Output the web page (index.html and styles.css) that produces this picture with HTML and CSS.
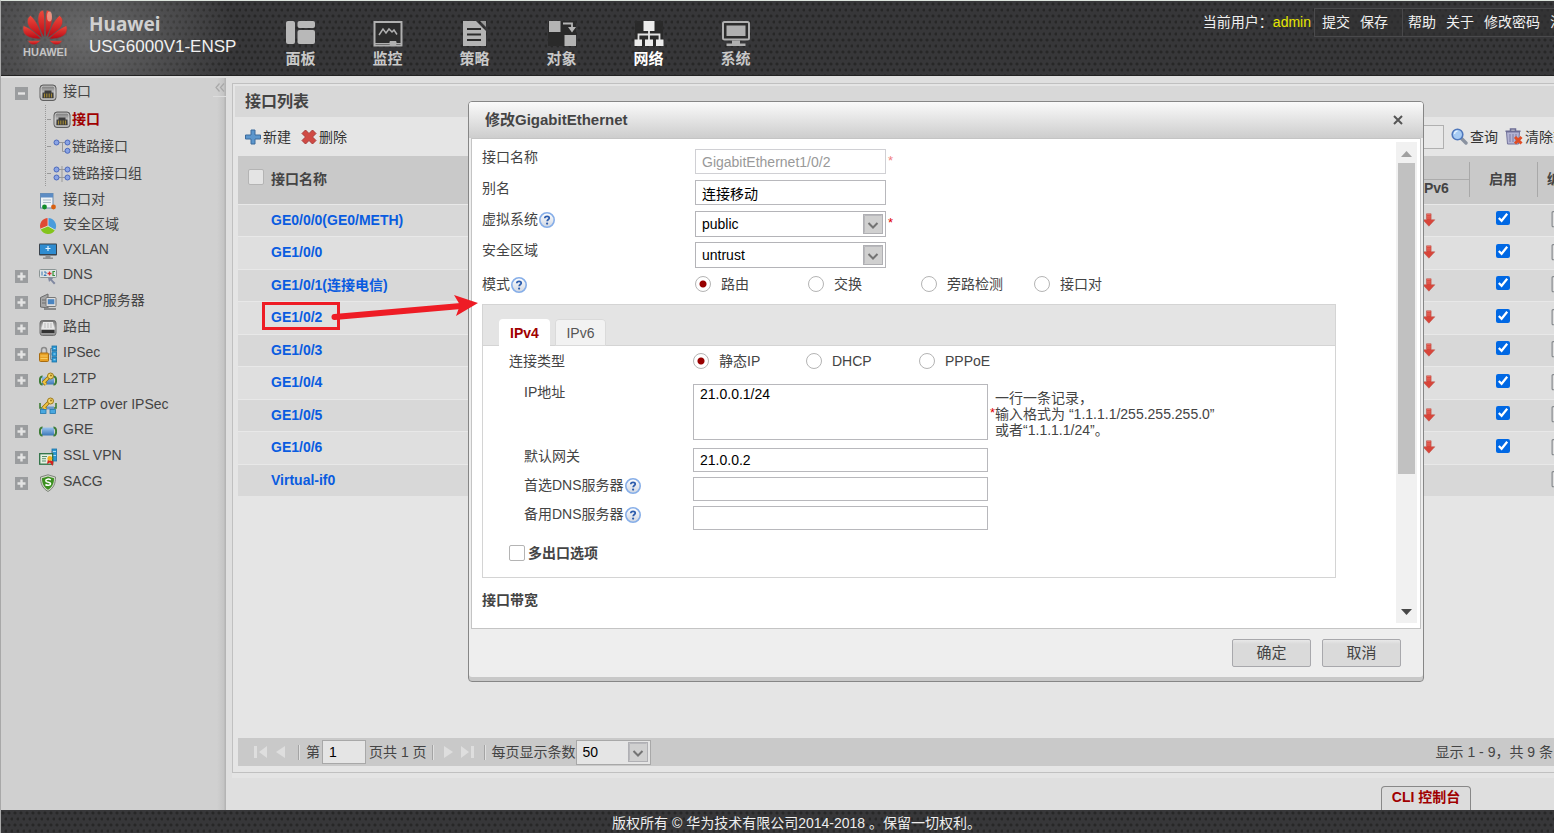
FILE: index.html
```html
<!DOCTYPE html>
<html lang="zh-CN">
<head>
<meta charset="utf-8">
<title>Huawei USG6000V1-ENSP</title>
<link rel="stylesheet" href="styles.css">
</head>
<body>
<svg class="defs" aria-hidden="true">
  <defs>
    <linearGradient id="g-petal" x1="0" y1="0" x2="0" y2="1"><stop offset="0" stop-color="#ee4a3c"/><stop offset="1" stop-color="#b80714"/></linearGradient>
    <linearGradient id="g-metal" x1="0" y1="0" x2="0" y2="1"><stop offset="0" stop-color="#6e6e6e"/><stop offset=".5" stop-color="#c4c4c4"/><stop offset="1" stop-color="#8a8a8a"/></linearGradient>
    <linearGradient id="g-blue" x1="0" y1="0" x2="0" y2="1"><stop offset="0" stop-color="#9cc4ee"/><stop offset="1" stop-color="#3c78b8"/></linearGradient>
    <linearGradient id="g-help" x1="0" y1="0" x2="0" y2="1"><stop offset="0" stop-color="#ffffff"/><stop offset="1" stop-color="#cfd6e2"/></linearGradient>
  </defs>
  <symbol id="i-minus" viewBox="0 0 13 13"><rect width="13" height="13" fill="#9b9d9f"/><path d="M3 6.500h7" stroke="#e4e4e4" stroke-width="2.400"/></symbol>
  <symbol id="i-plus" viewBox="0 0 13 13"><rect width="13" height="13" fill="#9b9d9f"/><path d="M2.500 6.500h8M6.500 2.500v8" stroke="#e4e4e4" stroke-width="2.400"/></symbol>
  <symbol id="i-port" viewBox="0 0 18 18"><rect x="1" y="1" width="16" height="15.500" rx="3" fill="url(#g-metal)" stroke="#606060"/><rect x="2.200" y="2.200" width="13.600" height="13" rx="2" fill="none" stroke="#d4d4d4" stroke-width=".8"/><path d="M3.500 14V8.500h2V6.500h7v2h2V14z" fill="#3c3c3c"/><path d="M5.500 9.500v4M7.800 9.500v4M10.200 9.500v4M12.500 9.500v4" stroke="#a48a34" stroke-width="1.100"/></symbol>
  <symbol id="i-link" viewBox="0 0 18 18"><path d="M4 4.500h11M9.500 4.500v9h5" fill="none" stroke="#999"/><g fill="#8aa4e4" stroke="#4a68bc"><circle cx="3.500" cy="4.500" r="2.500"/><circle cx="14.500" cy="4.500" r="2.500"/><circle cx="14.500" cy="12.800" r="2.500"/></g></symbol>
  <symbol id="i-linkgroup" viewBox="0 0 18 18"><path d="M9 1v16M3.500 4.500h11M3.500 12.500h11" stroke="#999"/><g fill="#8aa4e4" stroke="#4a68bc"><circle cx="3.500" cy="4.500" r="2.500"/><circle cx="14.500" cy="4.500" r="2.500"/><circle cx="3.500" cy="12.500" r="2.500"/><circle cx="14.500" cy="12.500" r="2.500"/></g></symbol>
  <symbol id="i-pair" viewBox="0 0 18 18"><rect x="1.500" y="1.500" width="12.500" height="14.500" fill="#eef2f6" stroke="#6c8cac"/><rect x="1.500" y="1.500" width="12.500" height="4" fill="#5c8cc4"/><path d="M4 8h8M4 10.500h8" stroke="#a8b8c4"/><circle cx="5.500" cy="15" r="2.400" fill="#108c28"/><circle cx="14.500" cy="15" r="2.400" fill="#d86010"/></symbol>
  <symbol id="i-zone" viewBox="0 0 18 18"><path d="M9 9V1A8 8 0 0 0 1.600 12z" fill="#e04a34"/><path d="M9 9V1A8 8 0 0 1 16 13z" fill="#4a9cdc"/><path d="M9 9L1.600 12A8 8 0 0 0 16 13z" fill="#84c41c"/><path d="M9 1v8l-7.400 3M9 9l7 4" fill="none" stroke="#e8e8e8" stroke-width=".8"/></symbol>
  <symbol id="i-vxlan" viewBox="0 0 18 18"><rect y="1.500" width="18" height="12" rx="1" fill="#38424c"/><rect x="1" y="2.500" width="16" height="9.500" fill="#2f8cd0"/><path d="M9 4v5M6.500 6.500h5" stroke="#dff2ff" stroke-width="1.200"/><path d="M6.500 13.500h5v2h2.500V17h-10v-1.500h2.500z" fill="#909090"/></symbol>
  <symbol id="i-dns" viewBox="0 0 18 18"><rect x=".5" y="2.500" width="17" height="8" rx="1" fill="#dfe4e4" stroke="#8a9494"/><path d="M3 4.500v4M5 5h2v1.500L5 8.500h2.500" fill="none" stroke="#3c78b4"/><path d="M8.500 6.500h4M10.500 4.500v4" stroke="#d83030" stroke-width="1.300"/><path d="M16 4.500h-2v4h2" fill="none" stroke="#389038" stroke-width="1.200"/><path d="M9 10.500l5 .5-1 1.500 3.500 3.500-1.500 1.500-3.500-4-1.500 1.500z" fill="#8088a0"/></symbol>
  <symbol id="i-dhcp" viewBox="0 0 18 18"><path d="M1.500 4.500L9 1v14l-7.500-1z" fill="#a6a6a6" stroke="#6c6c6c"/><path d="M3 7h4M3 10h4" stroke="#6c6c6c"/><rect x="7" y="4.500" width="10" height="9" rx="1" fill="#ddd" stroke="#787878"/><rect x="8.800" y="6.200" width="6.500" height="5" fill="#4a84c0"/><path d="M5 16h12" stroke="#888" stroke-width="2"/></symbol>
  <symbol id="i-route" viewBox="0 0 18 18"><rect x="1" y="1.500" width="16" height="15" rx="2.500" fill="url(#g-metal)" stroke="#707070"/><path d="M4 3h10l1.500 7h-13z" fill="#e8e8e8"/><path d="M6 4v5M9 4v5M12 4v5" stroke="#bbb"/><path d="M2.500 11h13v3h-13z" fill="#333"/></symbol>
  <symbol id="i-ipsec" viewBox="0 0 18 18"><path d="M2.500 8V5a2.500 2.500 0 0 1 5 0v3" fill="none" stroke="#8a8a8a" stroke-width="1.500"/><rect x=".5" y="8" width="9" height="8.500" rx="1" fill="#e8a024" stroke="#a86c10"/><path d="M1.500 11h7M1.500 13.500h7" stroke="#f8cc60"/><path d="M9.500 9h5M11.500 3.500v11h3M11.500 3.500h3" fill="none" stroke="#808890"/><g fill="#2c98d4" stroke="#1c74a8" stroke-width=".8"><rect x="13" y="1" width="4.600" height="4.600"/><rect x="13" y="6.700" width="4.600" height="4.600"/><rect x="13" y="12.400" width="4.600" height="4.600"/></g><path d="M14.500 3.500h2M14.500 9h2M14.500 14.700h2" stroke="#a8dcf4"/></symbol>
  <symbol id="i-tunnel" viewBox="0 0 18 18"><rect x="3" y="5.500" width="12" height="8" fill="url(#g-blue)"/><path d="M3.500 5.500C0 5 0 14 3.500 13.500M14.500 5.500C18 5 18 14 14.500 13.500" fill="none" stroke="#3c7c34" stroke-width="2"/></symbol>
  <symbol id="i-key" viewBox="0 0 18 18"><path d="M4 12l6-6M5 11.500l2 2" stroke="#906c10" stroke-width="3.400"/><path d="M4 12l6-6M5 11.500l2 2" stroke="#f0c440" stroke-width="2"/><circle cx="11.500" cy="5" r="3" fill="#f4d468" stroke="#9c7818"/><circle cx="12" cy="4.500" r="1" fill="#9c7818"/></symbol>
  <symbol id="i-l2tp" viewBox="0 0 18 18"><use href="#i-tunnel" width="18" height="18"/><use href="#i-key" width="18" height="18"/></symbol>
  <symbol id="i-l2tpip" viewBox="0 0 18 18"><path d="M1 6v5h3M17 6v5h-3" fill="none" stroke="#3c7c34" stroke-width="1.600"/><path d="M3 11h12" stroke="#6898cc" stroke-width="3"/><use href="#i-key" y="-1" width="18" height="18"/><g fill="#4aa8e0" stroke="#2478ac" stroke-width=".8"><rect x="1.500" y="12.500" width="5.500" height="4"/><rect x="11" y="12.500" width="5.500" height="4"/></g></symbol>
  <symbol id="i-ssl" viewBox="0 0 18 18"><rect x="13" y="1" width="4.600" height="12" fill="#2c98d4" stroke="#1c74a8" stroke-width=".8"/><path d="M14 3.500h3M14 7.500h3" stroke="#a8dcf4"/><path d="M10 6h3V3" fill="none" stroke="#888"/><rect x=".7" y="5.700" width="13" height="10.500" fill="#e6f0e2" stroke="#2c7044" stroke-width="1.300"/><path d="M3 8.500h5M3 10.700h4M3 13h4" stroke="#58906c"/><path d="M9 11l-1 5 3-1.500 2.500 3.500 1-4.500z" fill="#d42020"/><circle cx="10.800" cy="10.500" r="2.400" fill="#f0b020"/></symbol>
  <symbol id="i-sacg" viewBox="0 0 18 18"><path d="M9 .8L16.500 3c0 6-1.500 11-7.500 14.500C3 14 1.500 9 1.500 3z" fill="#d4d8cc" stroke="#7c8478"/><path d="M9 2.500L15 4.200C15 9 13.500 13 9 15.800 4.500 13 3 9 3 4.200z" fill="#3c9020"/><path d="M11.800 5.800c-2-1.200-5.200-.8-5 1 .2 2 4.800 1 4.800 3 0 1.800-3.200 2-5.200.7" fill="none" stroke="#fff" stroke-width="1.500"/></symbol>
  <symbol id="i-help" viewBox="0 0 16 16"><circle cx="8" cy="8" r="7.200" fill="url(#g-help)" stroke="#86aee8" stroke-width="1.600"/><path d="M5.800 6.300c0-2.700 4.600-2.500 4.400-.1-.1 1.300-2 1.400-2 3" fill="none" stroke="#2c5cac" stroke-width="1.800"/><circle cx="8.100" cy="11.600" r="1.100" fill="#2c5cac"/></symbol>
  <symbol id="i-caret" viewBox="0 0 20 20"><rect x=".5" y=".5" width="19" height="19" fill="#d0d0d0" stroke="#b0b0b4"/><path d="M1.500 18.500v-17h17" fill="none" stroke="#b8b8bc"/><path d="M5.500 9l4.500 4.500L14.500 9" fill="none" stroke="#747474" stroke-width="2"/></symbol>
  <symbol id="i-down" viewBox="0 0 14 14"><path d="M4.500.8h4.600v6h3.700L6.900 13.200.9 6.800h3.600z" fill="#d8453a" stroke="#c05a50" stroke-width=".6"/><path d="M5 1.500h3.600M5 3.200h3.600M5 5h3.600" stroke="#eb7a70" stroke-width=".7"/></symbol>
  <symbol id="i-edit" viewBox="0 0 16 18"><rect x=".7" y=".7" width="14" height="16" rx="1" fill="#e0e0e0" stroke="#84888c" stroke-width="1.200"/><path d="M3 5h9M3 8h9M3 11h9" stroke="#9a9ea2"/></symbol>
</svg>

<div class="page">
  <header class="topbar">
    <div class="brand">
      <div class="logo">
        <svg width="46" height="36" viewBox="0 0 46 36" aria-hidden="true">
          <g fill="url(#g-petal)" stroke="#5c5c5c" stroke-width=".7">
            <path d="M21.800 27C15 16 14.500 6 18 1.500c1-.8 2.500-1.300 3.500-1.200C23.300 7 23 19 22.300 27z"/>
            <path d="M24.200 27C31 16 31.500 6 28 1.500c-1-.8-2.500-1.300-3.500-1.200C22.700 7 23 19 23.700 27z"/>
            <path d="M20.300 27.800C18 18 14 10 8.500 5.500 5.500 7.500 4.500 11 6 15c2 5 9 10 14.300 12.800z"/>
            <path d="M25.700 27.800C28 18 32 10 37.500 5.500c3 2 4 5.500 2.500 9.500-2 5-9 10-14.300 12.800z"/>
            <path d="M19.300 29C14 23 8 18 1.500 15.500.2 19 .8 23 4 25.500c4 3 10 3.500 15.300 3.500z"/>
            <path d="M26.700 29C32 23 38 18 44.500 15.500c1.300 3.500.7 7.500-2.500 10-4 3-10 3.500-15.300 3.500z"/>
            <path d="M19 30.300c-4.500.4-9 .6-13.500.3 1.500 3 4 4.500 7 4.200 2.500-.4 4.500-2.500 6.500-4.500z"/>
            <path d="M27 30.300c4.500.4 9 .6 13.500.3-1.500 3-4 4.500-7 4.200-2.500-.4-4.500-2.500-6.500-4.500z"/>
          </g>
          <ellipse cx="27.500" cy="6.500" rx="2.500" ry="5" fill="#f6b29c" opacity=".7"/>
        </svg>
        <span class="logo-word">HUAWEI</span>
      </div>
      <div class="product">
        <strong class="vendor">Huawei</strong>
        <span class="model">USG6000V1-ENSP</span>
      </div>
    </div>
    <nav class="mainnav">
      <a href="#" class="nav-item">
        <svg width="30" height="26" viewBox="0 0 30 26" fill="#b8b8b8"><rect y="0" width="9" height="23" rx="2"/><rect x="11.500" width="17.500" height="7" rx="2"/><rect x="11.500" y="9" width="17.500" height="14" rx="2"/></svg>
        <span>面板</span></a>
      <a href="#" class="nav-item">
        <svg width="30" height="26" viewBox="0 0 30 26"><rect x="1.500" y="1" width="27" height="23.500" fill="#2c2c2c" stroke="#b0b0b0" stroke-width="2"/><path d="M6 14l4-6 3 4 3-4 3 3 2-2 3 4.500" fill="none" stroke="#b0b0b0" stroke-width="1.500"/><path d="M2 22.500h26M17 20.500h6v3h-6z" fill="#b0b0b0" stroke="#b0b0b0"/></svg>
        <span>监控</span></a>
      <a href="#" class="nav-item">
        <svg width="30" height="26" viewBox="0 0 30 26"><path d="M3 0h13l10 10v15H3z" fill="#b4b4b4"/><path d="M20 0h6v6z" fill="#999"/><path d="M7 8h14M7 13.500h14M7 19h14" stroke="#2c2c2c" stroke-width="2"/></svg>
        <span>策略</span></a>
      <a href="#" class="nav-item">
        <svg width="30" height="26" viewBox="0 0 30 26"><path d="M1 0h28v25H1z" fill="#2a2a2a"/><path d="M2 0h11.500v11H2zM17.500 14H29v11H17.500z" fill="#b4b4b4"/><path d="M16 2.500h9V7" fill="none" stroke="#b4b4b4" stroke-width="1.800"/><path d="M21 6h8l-4 5.500z" fill="#b4b4b4"/></svg>
        <span>对象</span></a>
      <a href="#" class="nav-item active">
        <svg width="30" height="26" viewBox="0 0 30 26"><path d="M1 0h28v25H1z" fill="#2a2a2a"/><path d="M4.500 19v-5.500h21V19M15 10v9" fill="none" stroke="#e4e4e4" stroke-width="1.800"/><path d="M9.500 0h11v10h-11zM.5 18.500H8V25H.5zM11 18.500h8V25h-8zM22 18.500h7.500V25H22z" fill="#ececec"/></svg>
        <span>网络</span></a>
      <a href="#" class="nav-item">
        <svg width="30" height="26" viewBox="0 0 30 26"><rect x="2" y="1" width="26" height="17.500" rx="1.500" fill="#2c2c2c" stroke="#b0b0b0" stroke-width="2"/><rect x="5.500" y="4.500" width="19" height="10.500" fill="#b0b0b0"/><path d="M11 19.500h8v3h5.500V25h-19v-2.500H11z" fill="#b0b0b0"/></svg>
        <span>系统</span></a>
    </nav>
    <div class="userbar">
      <span class="user">当前用户：<b>admin</b></span>
      <div class="userlinks">
        <a href="#">提交</a><a href="#">保存</a><i class="vsep"></i><a href="#">帮助</a><a href="#">关于</a><a href="#">修改密码</a><a href="#">注销</a>
      </div>
    </div>
  </header>

  <div class="body">
    <aside class="sidebar">
      <button class="collapse" aria-label="收起"><svg width="10" height="9" viewBox="0 0 10 9"><path d="M4.500.5l-3.500 4 3.500 4M9 .5L5.500 4.500 9 8.500" fill="none" stroke="#a8a8a8" stroke-width="1.200"/></svg></button>
      <ul class="tree">
        <li class="node first"><svg class="exp"><use href="#i-minus"/></svg><svg class="ico"><use href="#i-port"/></svg><a href="#">接口</a></li>
        <li>
          <ul class="subtree">
            <li class="leaf current"><svg class="ico"><use href="#i-port"/></svg><a href="#">接口</a></li>
            <li class="leaf"><svg class="ico"><use href="#i-link"/></svg><a href="#">链路接口</a></li>
            <li class="leaf"><svg class="ico"><use href="#i-linkgroup"/></svg><a href="#">链路接口组</a></li>
          </ul>
        </li>
        <li class="node plain"><svg class="ico"><use href="#i-pair"/></svg><a href="#">接口对</a></li>
        <li class="node plain"><svg class="ico"><use href="#i-zone"/></svg><a href="#">安全区域</a></li>
        <li class="node plain"><svg class="ico"><use href="#i-vxlan"/></svg><a href="#">VXLAN</a></li>
        <li class="node"><svg class="exp"><use href="#i-plus"/></svg><svg class="ico"><use href="#i-dns"/></svg><a href="#">DNS</a></li>
        <li class="node"><svg class="exp"><use href="#i-plus"/></svg><svg class="ico"><use href="#i-dhcp"/></svg><a href="#">DHCP服务器</a></li>
        <li class="node"><svg class="exp"><use href="#i-plus"/></svg><svg class="ico"><use href="#i-route"/></svg><a href="#">路由</a></li>
        <li class="node"><svg class="exp"><use href="#i-plus"/></svg><svg class="ico"><use href="#i-ipsec"/></svg><a href="#">IPSec</a></li>
        <li class="node"><svg class="exp"><use href="#i-plus"/></svg><svg class="ico"><use href="#i-l2tp"/></svg><a href="#">L2TP</a></li>
        <li class="node plain"><svg class="ico"><use href="#i-l2tpip"/></svg><a href="#">L2TP over IPSec</a></li>
        <li class="node"><svg class="exp"><use href="#i-plus"/></svg><svg class="ico"><use href="#i-tunnel"/></svg><a href="#">GRE</a></li>
        <li class="node"><svg class="exp"><use href="#i-plus"/></svg><svg class="ico"><use href="#i-ssl"/></svg><a href="#">SSL VPN</a></li>
        <li class="node"><svg class="exp"><use href="#i-plus"/></svg><svg class="ico"><use href="#i-sacg"/></svg><a href="#">SACG</a></li>
      </ul>
    </aside>

    <main class="workspace">
      <section class="panel">
        <h1 class="panel-title">接口列表</h1>
        <div class="panel-body">
          <div class="toolbar">
            <button class="tool"><svg width="16" height="16" viewBox="0 0 16 16"><path d="M6 1h4v5h5.500v4H10v5H6v-5H.5V6H6z" fill="#5c96cc" stroke="#3a6a9c"/></svg>新建</button>
            <button class="tool"><svg width="16" height="16" viewBox="0 0 16 16"><path d="M4.500 1L8 4.500 11.500 1 15 4.500 11.500 8 15 11.500 11.500 15 8 11.500 4.500 15 1 11.500 4.500 8 1 4.500z" fill="#d04a44" stroke="#a83a38"/></svg>删除</button>
            <div class="search">
              <input type="text" class="search-box" aria-label="查询条件">
              <button class="tool"><svg width="17" height="17" viewBox="0 0 17 17"><path d="M10.500 10.500l4.500 4.500" stroke="#8a92a0" stroke-width="3.400" stroke-linecap="round"/><circle cx="6.500" cy="6.500" r="5.300" fill="#a8ccf4" stroke="#5078bc" stroke-width="1.600"/><path d="M3.500 6a3 3 0 0 1 3-2.800" fill="none" stroke="#e4f2ff" stroke-width="1.300"/></svg>查询</button>
              <button class="tool trash"><svg width="18" height="17" viewBox="0 0 18 17"><path d="M1.500 4h13l-1 12h-11z" fill="#b4b4d4" stroke="#74749c"/><path d="M5 6v8M8 6v8M11 6v8" stroke="#7c7ca4"/><path d="M.5 3.200h15M5.500 3V1h5v2" fill="none" stroke="#6c6c94" stroke-width="1.500"/><path d="M10 9l6.500 6.500M16.500 9L10 15.500" stroke="#e04c24" stroke-width="3"/></svg>清除查询</button>
            </div>
          </div>
          <table class="grid">
            <colgroup><col class="c-check"><col><col class="c-v6"><col class="c-on"><col class="c-edit"></colgroup>
            <thead>
              <tr>
                <th rowspan="2" class="check"><input type="checkbox" class="box" aria-label="全选"></th>
                <th rowspan="2" class="name">接口名称</th>
                <th class="group"></th>
                <th rowspan="2" class="bar">启用</th>
                <th rowspan="2" class="edit-h">编辑</th>
              </tr>
              <tr><th class="v6">IPv6</th></tr>
            </thead>
            <tbody>
              <tr><td></td><td><a href="#">GE0/0/0(GE0/METH)</a></td><td class="v6"><svg class="arrow-ico"><use href="#i-down"/></svg></td><td class="on"><input type="checkbox" checked aria-label="启用 GE0/0/0"></td><td class="edit"><svg class="edit-ico"><use href="#i-edit"/></svg></td></tr>
              <tr><td></td><td><a href="#">GE1/0/0</a></td><td class="v6"><svg class="arrow-ico"><use href="#i-down"/></svg></td><td class="on"><input type="checkbox" checked aria-label="启用 GE1/0/0"></td><td class="edit"><svg class="edit-ico"><use href="#i-edit"/></svg></td></tr>
              <tr><td></td><td><a href="#">GE1/0/1(连接电信)</a></td><td class="v6"><svg class="arrow-ico"><use href="#i-down"/></svg></td><td class="on"><input type="checkbox" checked aria-label="启用 GE1/0/1"></td><td class="edit"><svg class="edit-ico"><use href="#i-edit"/></svg></td></tr>
              <tr><td></td><td><a href="#">GE1/0/2</a></td><td class="v6"><svg class="arrow-ico"><use href="#i-down"/></svg></td><td class="on"><input type="checkbox" checked aria-label="启用 GE1/0/2"></td><td class="edit"><svg class="edit-ico"><use href="#i-edit"/></svg></td></tr>
              <tr><td></td><td><a href="#">GE1/0/3</a></td><td class="v6"><svg class="arrow-ico"><use href="#i-down"/></svg></td><td class="on"><input type="checkbox" checked aria-label="启用 GE1/0/3"></td><td class="edit"><svg class="edit-ico"><use href="#i-edit"/></svg></td></tr>
              <tr><td></td><td><a href="#">GE1/0/4</a></td><td class="v6"><svg class="arrow-ico"><use href="#i-down"/></svg></td><td class="on"><input type="checkbox" checked aria-label="启用 GE1/0/4"></td><td class="edit"><svg class="edit-ico"><use href="#i-edit"/></svg></td></tr>
              <tr><td></td><td><a href="#">GE1/0/5</a></td><td class="v6"><svg class="arrow-ico"><use href="#i-down"/></svg></td><td class="on"><input type="checkbox" checked aria-label="启用 GE1/0/5"></td><td class="edit"><svg class="edit-ico"><use href="#i-edit"/></svg></td></tr>
              <tr><td></td><td><a href="#">GE1/0/6</a></td><td class="v6"><svg class="arrow-ico"><use href="#i-down"/></svg></td><td class="on"><input type="checkbox" checked aria-label="启用 GE1/0/6"></td><td class="edit"><svg class="edit-ico"><use href="#i-edit"/></svg></td></tr>
              <tr><td></td><td><a href="#">Virtual-if0</a></td><td></td><td></td><td class="edit"><svg class="edit-ico"><use href="#i-edit"/></svg></td></tr>
            </tbody>
          </table>
          <div class="pager">
            <button class="pg" aria-label="首页" disabled><svg width="14" height="12" viewBox="0 0 14 12" fill="#dedede"><path d="M0 0h3v12H0zM13 0v12L5 6z"/></svg></button>
            <button class="pg prev" aria-label="上一页" disabled><svg width="10" height="12" viewBox="0 0 10 12" fill="#dedede"><path d="M9 0v12L0 6z"/></svg></button>
            <i class="sep"></i>
            <label for="pageno">第</label>
            <input id="pageno" class="pageno" type="text" value="1">
            <span>页共 1 页</span>
            <i class="sep"></i>
            <button class="pg next" aria-label="下一页" disabled><svg width="10" height="12" viewBox="0 0 10 12" fill="#dedede"><path d="M1 0v12l9-6z"/></svg></button>
            <button class="pg last" aria-label="末页" disabled><svg width="14" height="12" viewBox="0 0 14 12" fill="#dedede"><path d="M1 0v12l8-6zM11 0h3v12h-3z"/></svg></button>
            <i class="sep"></i>
            <label for="pagesize">每页显示条数</label>
            <div class="combo small"><select id="pagesize"><option>50</option></select><svg class="caret"><use href="#i-caret"/></svg></div>
            <span class="total">显示 1 - 9，共 9 条</span>
          </div>
        </div>
      </section>
      <div class="dock"><button class="cli">CLI 控制台</button></div>
    </main>
  </div>

  <footer class="footer">版权所有 © 华为技术有限公司2014-2018 。保留一切权利。</footer>
</div>

<div class="dialog" role="dialog" aria-labelledby="dlg-title">
  <div class="dlg-head">
    <h2 id="dlg-title">修改GigabitEthernet</h2>
    <button class="close" aria-label="关闭"><svg width="10" height="10" viewBox="0 0 10 10"><path d="M1 1l8 8M9 1L1 9" stroke="#555" stroke-width="2"/></svg></button>
  </div>
  <div class="dlg-body">
    <form class="form" id="ifform">
      <div class="row"><label for="ifname">接口名称</label><div class="ctl"><input id="ifname" class="field" type="text" value="GigabitEthernet1/0/2" disabled><span class="req dim">*</span></div></div>
      <div class="row"><label for="alias">别名</label><div class="ctl"><input id="alias" class="field" type="text" value="连接移动"></div></div>
      <div class="row"><label for="vsys">虚拟系统<svg class="help"><use href="#i-help"/></svg></label><div class="ctl"><div class="combo"><select id="vsys"><option>public</option></select><svg class="caret"><use href="#i-caret"/></svg></div><span class="req">*</span></div></div>
      <div class="row"><label for="zone">安全区域</label><div class="ctl"><div class="combo"><select id="zone"><option>untrust</option></select><svg class="caret"><use href="#i-caret"/></svg></div></div></div>
      <div class="row modes"><span class="lbl">模式<svg class="help"><use href="#i-help"/></svg></span>
        <div class="radios">
          <label><input type="radio" name="mode" checked>路由</label>
          <label><input type="radio" name="mode">交换</label>
          <label><input type="radio" name="mode">旁路检测</label>
          <label><input type="radio" name="mode">接口对</label>
        </div>
      </div>
      <section class="ipbox">
        <div class="tabs" role="tablist"><button type="button" role="tab" class="tab on">IPv4</button><button type="button" role="tab" class="tab">IPv6</button></div>
        <div class="ip-content">
          <div class="iprow types"><span class="lbl">连接类型</span>
            <div class="radios">
              <label><input type="radio" name="ctype" checked>静态IP</label>
              <label><input type="radio" name="ctype">DHCP</label>
              <label><input type="radio" name="ctype">PPPoE</label>
            </div>
          </div>
          <div class="iprow sub addr"><label for="ipaddr">IP地址</label><textarea id="ipaddr">21.0.0.1/24</textarea>
            <span class="req">*</span><p class="hint">一行一条记录，<br>输入格式为 “1.1.1.1/255.255.255.0”<br>或者“1.1.1.1/24”。</p></div>
          <div class="iprow sub"><label for="gw">默认网关</label><input id="gw" class="wide" type="text" value="21.0.0.2"></div>
          <div class="iprow sub"><label for="dns1">首选DNS服务器<svg class="help"><use href="#i-help"/></svg></label><input id="dns1" class="wide" type="text"></div>
          <div class="iprow sub"><label for="dns2">备用DNS服务器<svg class="help"><use href="#i-help"/></svg></label><input id="dns2" class="wide" type="text"></div>
          <label class="multi"><input type="checkbox" class="box">多出口选项</label>
        </div>
      </section>
      <h3 class="subhead">接口带宽</h3>
    </form>
    <div class="scroll">
      <svg width="11" height="6" viewBox="0 0 11 6"><path d="M0 6h11L5.500 0z" fill="#a0a0a0"/></svg>
      <div class="thumb"></div>
      <svg class="sdown" width="11" height="6" viewBox="0 0 11 6"><path d="M0 0h11L5.500 6z" fill="#484848"/></svg>
    </div>
  </div>
  <div class="dlg-foot"><button class="btn">确定</button><button class="btn">取消</button></div>
</div>

<svg class="callout" width="220" height="38" viewBox="0 0 220 38" aria-hidden="true">
  <rect x="2.500" y="8.500" width="75" height="25" fill="none" stroke="#ee1c25" stroke-width="3"/>
  <path d="M73.500 22L200 11" stroke="#ee1c25" stroke-width="6" stroke-linecap="round"/>
  <path d="M217 8L193 0l6 10-4 11z" fill="#ee1c25"/>
</svg>
</body>
</html>
```
FILE: styles.css
```css
* { box-sizing: border-box; }

body {
  margin: 0;
  height: 100vh;
  overflow: hidden;
  position: relative;
  font: 14px/20px "Liberation Sans", "Noto Sans CJK SC", sans-serif;
  color: #444;
  background: #dfdfdf;
}

a { color: inherit; text-decoration: none; }
ul { list-style: none; margin: 0; padding: 0; }
button, input, select, textarea { font: inherit; color: inherit; margin: 0; }
button { background: none; border: 0; padding: 0; }
.defs { position: absolute; width: 0; height: 0; }

/* The console is laid out a little wider than the viewport and clipped. */
.page {
  width: calc(100vw + 38px);
  height: 100vh;
  display: flex;
  flex-direction: column;
  border-left: 1px solid #a8a8a8;
  border-top: 1px solid #dce4dc;
}

/* Header */
.topbar, .footer {
  background-color: #373739;
  background-image:
    radial-gradient(circle at 2px 3px, #272727 1px, transparent 2px),
    radial-gradient(circle at 5px 9px, #272727 1px, transparent 2px);
  background-size: 6px 12px;
}
.topbar {
  flex: none;
  height: 75px;
  display: flex;
  align-items: flex-start;
  border-bottom: 1px solid #222;
}
.brand {
  width: 256px;
  height: 74px;
  display: flex;
  padding: 9px 0 0 20px;
  background: radial-gradient(ellipse 150px 110px at 84px 34px, rgba(150, 150, 150, .55), rgba(150, 150, 150, 0));
}
.logo { width: 48px; display: flex; flex-direction: column; align-items: center; }
.logo-word { font: bold 11px/12px "Liberation Sans", sans-serif; color: #c4c4c4; }
.product { display: flex; flex-direction: column; padding: 2px 0 0 20px; }
.vendor { font: bold 19px/24px "Noto Sans", sans-serif; color: #d0d0d0; }
.model { font-size: 17px; line-height: 22px; color: #f0f0f0; }
.mainnav { display: flex; padding-top: 20px; }
.nav-item {
  width: 87px;
  display: flex;
  flex-direction: column;
  align-items: center;
  font-size: 15px;
  font-weight: bold;
  line-height: 24px;
  color: #c8c8c8;
}
.nav-item.active { color: #fff; }
.userbar { margin-left: auto; display: flex; padding-top: 7px; color: #f0f0f0; }
.user { line-height: 28px; padding-right: 3px; }
.user b { font-weight: normal; color: #e6e600; }
.userlinks {
  display: flex;
  gap: 10px;
  height: 29px;
  padding: 0 14px 0 7px;
  line-height: 26px;
  border: 1px solid #4a4a4c;
  border-right: 0;
  background: rgba(48, 48, 50, .6);
}
.vsep { width: 1px; margin-left: 4px; margin-right: -5px; background: #48484a; }

.body { flex: 1; min-height: 0; display: flex; background: #dfdfdf; }

/* Sidebar */
.sidebar {
  flex: none;
  width: 225px;
  margin-top: 2px;
  position: relative;
  background: linear-gradient(to right, #d0d0d0 216px, #c4c4c4 223px, #b4b4b4 224px);
}
.collapse { position: absolute; top: 0; right: 0; width: 13px; height: 19px; border-bottom: 1px solid #ddd; line-height: 0; }
.node, .leaf { display: flex; height: 26px; }
.node { padding-left: 14px; }
.node.plain { height: 25px; padding-left: 38px; }
.node.first, .leaf { height: 27px; }
.node a { line-height: 27px; padding-left: 6px; }
.leaf a { line-height: 29px; padding-left: 1px; }
.exp { width: 13px; height: 13px; margin: 9px 11px 0 0; }
.ico { width: 18px; height: 18px; margin-top: 6px; }
.subtree {
  padding-left: 52px;
  background-image:
    linear-gradient(#999 50%, transparent 50%),
    linear-gradient(to right, #999 50%, transparent 50%, transparent),
    linear-gradient(to right, #999 50%, transparent 50%, transparent),
    linear-gradient(to right, #999 50%, transparent 50%, transparent);
  background-size: 1px 2px, 8px 1px, 8px 1px, 8px 1px;
  background-repeat: repeat-y, no-repeat, no-repeat, no-repeat;
  background-position: 44px 0, 46px 14px, 46px 41px, 46px 68px;
}
.leaf.current a { color: #a00000; font-weight: bold; }

/* Interface list */
.workspace { flex: 1; min-width: 0; padding: 7px 0 0 6px; display: flex; flex-direction: column; }
.panel {
  flex: 1;
  display: flex;
  flex-direction: column;
  border: 1px solid #c0c0c0;
  border-right: 0;
  background: #e5e5e5;
  padding: 2px 0 6px 2px;
  box-shadow: 0 5px 0 #e4e4e4;
}
.panel-title { margin: 0; padding-left: 10px; font-size: 16px; line-height: 31px; color: #444; background: #d8d8d8; }
.panel-body { flex: 1; display: flex; flex-direction: column; padding: 0 6px 0 3px; }
.toolbar { display: flex; align-items: center; height: 39px; padding: 0 5px 0 7px; gap: 10px; }
.tool { display: flex; align-items: center; gap: 2px; color: #333; }
.search { margin-left: auto; display: flex; align-items: center; gap: 7px; }
.search-box { width: 180px; height: 24px; border: 1px solid #b0b0b0; background: #e8e8e8; }

.grid { width: 100%; table-layout: fixed; border-collapse: separate; border-spacing: 0; }
.grid th, .grid td { padding: 0; text-align: left; }
.c-check { width: 33px; }
.c-v6 { width: 83px; }
.c-on { width: 68px; }
.c-edit { width: 49px; }
.grid th { height: 24px; line-height: 20px; background: #c9c9c9; }
.grid .check { padding: 0 0 6px 10px; }
.grid .name, .grid .bar, .grid .edit-h { padding-bottom: 2px; }
.grid .group { border-bottom: 1px solid #ababab; }
.grid th.v6 { padding-left: 34px; line-height: 16px; vertical-align: top; }
.grid .bar, .grid .edit-h {
  background-image: linear-gradient(#a8a8a8, #a8a8a8);
  background-size: 1px 35px;
  background-repeat: no-repeat;
  background-position: 0 6px;
}
.grid th.bar { text-align: center; }
.grid th.edit-h { padding-left: 10px; }
.grid td { height: 32px; line-height: 20px; padding-bottom: 2px; border-top: 1px solid #e8e8e8; background: #d8d8d8; }
.grid tr:nth-child(even) td { height: 33px; background: #dfdfdf; }
.grid td a { color: #0a5ce0; font-weight: bold; }
.grid td.v6 { padding-left: 36px; }
.arrow-ico { display: block; width: 14px; height: 14px; }
.on { line-height: 0; }
.on input { display: block; width: 14px; height: 14px; margin: 0 auto 3px; accent-color: #0068e4; }
.grid td.edit { padding-left: 14px; }
.edit-ico { display: block; width: 16px; height: 17px; }

.box { appearance: none; display: block; width: 16px; height: 16px; border: 1px solid #b4b4b4; border-radius: 2px; background: #e4e4e4; }

.pager { margin-top: auto; display: flex; align-items: center; height: 28px; padding: 0 33px 0 16px; background: #c9c9c9; }
.pg { line-height: 0; }
.prev { margin: 0 12px 0 8px; }
.next { margin: 0 7px 0 3px; }
.last { margin-right: 10px; }
.sep { width: 2px; height: 15px; margin-right: 6px; border-left: 1px solid #a4a4a4; border-right: 1px solid #e0e0e0; }
.pageno { width: 44px; height: 24px; margin: 0 3px 0 2px; padding: 0 6px; border: 1px solid #a8a8a8; background: #e5e5e5; color: #000; }
.pager span + .sep { margin-left: 5px; }
.total { margin-left: auto; }

.combo { display: grid; width: 191px; height: 26px; background: #fff; border: 1px solid #b4b4b8; }
.combo select { grid-area: 1 / 1; appearance: none; width: 100%; border: 0; padding: 0 6px; background: transparent; color: #000; }
.caret { grid-area: 1 / 1; justify-self: end; align-self: center; width: 20px; height: 20px; margin-right: 2px; pointer-events: none; }
.combo.small { width: 75px; height: 25px; background: #e5e5e5; border-color: #a8a8a8; }

.dock { height: 37px; flex: none; display: flex; justify-content: flex-end; align-items: flex-end; padding-right: 121px; }
.cli {
  width: 90px;
  height: 24px;
  padding-bottom: 3px;
  border: 1px solid #888;
  border-bottom: 0;
  border-radius: 4px 4px 0 0;
  background: #dcdcdc;
  color: #a00000;
  font-weight: bold;
}

.footer { flex: none; height: 23px; line-height: 26px; text-align: center; color: #eee; }

/* Dialog */
.dialog {
  position: absolute;
  left: 468px;
  top: 101px;
  right: 130px;
  border: 1px solid #868686;
  border-radius: 4px;
  background: #eee;
  padding: 0 2px 3px;
  box-shadow: inset 0 -4px 0 #c8c8c8;
}
.dlg-head {
  display: flex;
  align-items: center;
  justify-content: space-between;
  height: 36px;
  margin: 0 -2px;
  padding: 0 20px 0 16px;
  border-radius: 3px 3px 0 0;
  background: linear-gradient(#fafafa, #cdcdcd);
}
.dlg-head h2 { margin: 0; font-size: 15px; color: #444; }
.close { line-height: 0; }
.dlg-body { display: flex; background: #fff; border: 1px solid #c4c4c4; padding: 3px 3px 5px 10px; }
.form { flex: 1; min-width: 0; padding: 3px 60px 0 0; }
.row { display: grid; grid-template-columns: 213px 1fr; height: 31px; line-height: 24px; }
.row.modes { height: 35px; line-height: 30px; padding-bottom: 5px; }
.row label, .iprow label { display: flex; }
.ctl { display: flex; padding-top: 4px; }
.field { width: 191px; height: 25px; border: 1px solid #b8b8bc; padding: 0 6px; background: #fff; color: #000; }
.field:disabled { border-color: #d0d0d4; color: #999; }
.req { color: #e00000; padding-left: 2px; font-size: 13px; line-height: 24px; }
.req.dim { color: #f08080; }
.help { width: 16px; height: 16px; margin: 5px 0 0 1px; }
.modes .help { margin-top: 8px; }
.lbl { display: flex; }
.radios { display: flex; }
.radios label { display: flex; align-items: center; width: 113px; gap: 10px; }
.radios input {
  appearance: none;
  width: 16px;
  height: 16px;
  border: 1px solid #b4b4b4;
  border-radius: 50%;
  background: #fff;
}
.radios input:checked { background: radial-gradient(circle, #980000 3px, #fff 4px); }

.ipbox { border: 1px solid #d4d4d4; }
.tabs { display: flex; gap: 5px; height: 41px; padding: 14px 16px 0; background: #e4e4e4; border-bottom: 1px solid #d4d4d4; }
.tab { width: 51px; height: 27px; border-radius: 4px 4px 0 0; background: #f2f2f2; box-shadow: inset 0 0 0 1px #dadada; color: #555; }
.tab.on { background: #fff; color: #a00000; font-weight: bold; box-shadow: none; }
.ip-content { padding: 0 0 14px 26px; }
.iprow { display: grid; grid-template-columns: 184px 295px auto 1fr; margin-bottom: 5px; line-height: 16px; }
.iprow.types { grid-template-columns: 184px 1fr; line-height: 30px; margin-bottom: 8px; }
.iprow.sub label { padding-left: 15px; }
.iprow.addr { margin-bottom: 8px; }
.iprow .help { margin-top: 1px; }
.iprow textarea { height: 56px; resize: none; border: 1px solid #b8b8bc; padding: 1px 6px; color: #000; background: #fff; }
.wide { height: 24px; border: 1px solid #b8b8bc; padding: 0 6px; color: #000; background: #fff; }
.iprow .req { padding: 17px 0 0 2px; }
.hint { margin: 6px 0 0; }
.multi { display: flex; align-items: center; gap: 3px; padding-top: 8px; font-weight: bold; }
.multi .box { background: #fff; }
.subhead { margin: 0; font-size: 14px; line-height: 45px; }

.scroll { width: 21px; background: #f1f1f1; display: flex; flex-direction: column; align-items: center; padding: 9px 0 8px; }
.thumb { width: 17px; height: 311px; margin-top: 6px; background: #c1c1c1; }
.sdown { margin-top: auto; }

.dlg-foot { display: flex; justify-content: flex-end; gap: 11px; padding: 10px 20px 11px; }
.btn {
  width: 79px;
  height: 28px;
  border: 1px solid #a8a8ac;
  border-radius: 2px;
  background: linear-gradient(#e8e8e8, #dadada 4px);
  font-size: 15px;
  color: #444;
}

/* Annotation over the list and the dialog */
.callout { position: absolute; left: 261px; top: 295px; }
```
